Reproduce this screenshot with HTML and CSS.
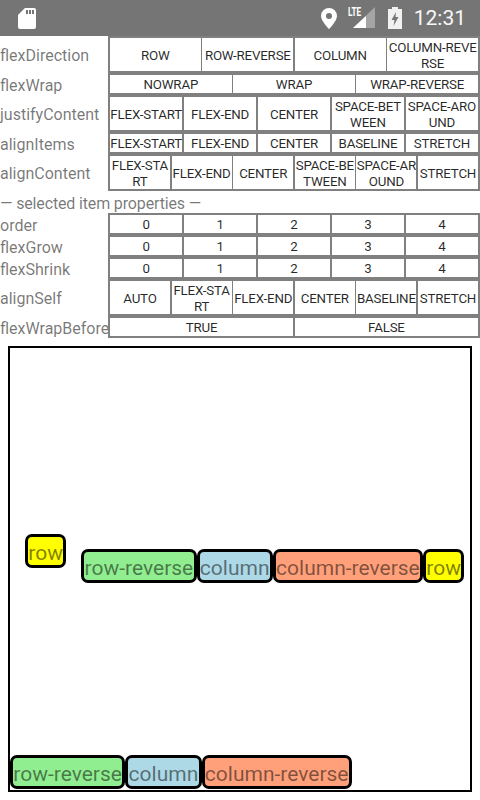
FILE: index.html
```html
<!DOCTYPE html>
<html lang="en">
<head>
<meta charset="utf-8">
<title>Flexbox playground</title>
<link rel="stylesheet" href="styles.css">
</head>
<body>
<div class="status">
  <svg class="sd" width="18" height="21" viewBox="0 0 18 21"><path fill="#fff" d="M7 0H16a2 2 0 0 1 2 2V19a2 2 0 0 1-2 2H2a2 2 0 0 1-2-2V7z"/><path fill="#757575" d="M8 2h2v4H8zM11 2h2v4h-2zM14 2h2v4h-2z"/></svg>
  <span class="grow"></span>
  <svg class="pin" width="16" height="21" viewBox="0 0 16 21"><path fill="#fff" fill-rule="evenodd" d="M8 0a8 8 0 0 1 8 8c0 5-8 13-8 13S0 13 0 8a8 8 0 0 1 8-8zm0 5a3 3 0 1 0 0 6 3 3 0 0 0 0-6z"/></svg>
  <span class="net">
    <span class="lte">LTE</span>
    <svg class="signal" width="22" height="22" viewBox="0 0 22 22"><path fill="#fff" fill-opacity=".35" d="M22 0V21H0z"/><path fill="#fff" d="M0 21 13 9V21z"/></svg>
  </span>
  <svg class="battery" width="14" height="22" viewBox="0 0 14 22"><path fill="#fff" fill-opacity=".9" d="M4 0h6v2h4V22H0V2h4z"/><path fill="#757575" d="M8 5 3.500 13H6.500L5.500 19 10.500 10H7.500z"/></svg>
  <span class="time">12:31</span>
</div>

<div class="line"><div class="label">flexDirection</div><div class="opts tall"><div class="opt">ROW</div><div class="opt">ROW-REVERSE</div><div class="opt">COLUMN</div><div class="opt">COLUMN-REVE<br>RSE</div></div></div>
<div class="line"><div class="label">flexWrap</div><div class="opts"><div class="opt">NOWRAP</div><div class="opt">WRAP</div><div class="opt">WRAP-REVERSE</div></div></div>
<div class="line"><div class="label">justifyContent</div><div class="opts tall"><div class="opt">FLEX-START</div><div class="opt">FLEX-END</div><div class="opt">CENTER</div><div class="opt">SPACE-BET<br>WEEN</div><div class="opt">SPACE-ARO<br>UND</div></div></div>
<div class="line"><div class="label">alignItems</div><div class="opts"><div class="opt">FLEX-START</div><div class="opt">FLEX-END</div><div class="opt">CENTER</div><div class="opt">BASELINE</div><div class="opt">STRETCH</div></div></div>
<div class="line"><div class="label">alignContent</div><div class="opts tall"><div class="opt">FLEX-STA<br>RT</div><div class="opt">FLEX-END</div><div class="opt">CENTER</div><div class="opt">SPACE-BE<br>TWEEN</div><div class="opt">SPACE-AR<br>OUND</div><div class="opt">STRETCH</div></div></div>
<div class="heading">— selected item properties —</div>
<div class="line"><div class="label">order</div><div class="opts"><div class="opt">0</div><div class="opt">1</div><div class="opt">2</div><div class="opt">3</div><div class="opt">4</div></div></div>
<div class="line"><div class="label">flexGrow</div><div class="opts"><div class="opt">0</div><div class="opt">1</div><div class="opt">2</div><div class="opt">3</div><div class="opt">4</div></div></div>
<div class="line"><div class="label">flexShrink</div><div class="opts"><div class="opt">0</div><div class="opt">1</div><div class="opt">2</div><div class="opt">3</div><div class="opt">4</div></div></div>
<div class="line"><div class="label">alignSelf</div><div class="opts tall"><div class="opt">AUTO</div><div class="opt">FLEX-STA<br>RT</div><div class="opt">FLEX-END</div><div class="opt">CENTER</div><div class="opt">BASELINE</div><div class="opt">STRETCH</div></div></div>
<div class="line"><div class="label">flexWrapBefore</div><div class="opts"><div class="opt">TRUE</div><div class="opt">FALSE</div></div></div>

<div class="canvas">
  <div class="flow first">
    <div class="item yellow raised">row</div>
    <div class="item green">row-reverse</div>
    <div class="item blue">column</div>
    <div class="item salmon">column-reverse</div>
    <div class="item yellow">row</div>
  </div>
  <div class="flow last">
    <div class="item green">row-reverse</div>
    <div class="item blue">column</div>
    <div class="item salmon">column-reverse</div>
  </div>
</div>
</body>
</html>
```
FILE: styles.css
```css
* { box-sizing: border-box; }
html, body { margin: 0; padding: 0; background: #fff; }
body { width: 480px; height: 800px; overflow: hidden; font-family: Roboto, sans-serif; }

.status { height: 36px; background: #757575; display: flex; align-items: center; padding: 0 14px 0 18px; }
.grow { flex: 1; }
.pin { margin-right: 10px; }
.net { position: relative; width: 28px; height: 22px; display: block; }
.lte { position: absolute; left: 1px; top: 0; color: #fff; font: 700 12.5px/10px Roboto, sans-serif; transform: scaleX(.65); transform-origin: left; }
.signal { position: absolute; left: 6px; top: 0; }
.battery { margin-left: 13px; margin-right: 12px; }
.time { color: #fff; font-size: 21px; opacity: .95; }

.line { display: flex; }
.label { width: 108px; flex: none; display: flex; align-items: center; padding-top: 2px; font-size: 16px; color: rgba(0,0,0,.54); white-space: nowrap; }
.opts { flex: 1; display: flex; gap: 1.67px; height: 22px; padding: 2px; background: #808080; }
.opts.tall { height: 37px; }
.opt { flex: 1 1 0; min-width: 0; display: flex; align-items: center; justify-content: center; padding-top: 2px; text-align: center; background: #fff; color: rgba(0,0,0,.85); font-size: 13.33px; line-height: 16px; letter-spacing: -.2px; white-space: nowrap; }
.heading { height: 22px; padding-top: 2px; line-height: 22px; font-size: 16px; letter-spacing: -.15px; color: rgba(0,0,0,.54); }

.canvas { margin: 8px 8px 0; height: 446px; border: 2px solid #000; display: flex; flex-direction: column; }
.flow { display: flex; align-items: flex-start; }
.first { margin-top: 186px; padding-left: 15px; }
.last { margin-top: auto; margin-bottom: 1px; }
.item { height: 34px; margin-top: 15px; padding: 2px .3px 0; border: 3px solid #000; border-radius: 7px; font-size: 21px; line-height: 28px; color: rgba(0,0,0,.5); white-space: nowrap; }
.item.raised { margin-top: 0; margin-right: 15px; }
.last .item { margin-top: 0; }
.yellow { background: #ff0; }
.green { background: #90ee90; }
.blue { background: #add8e6; }
.salmon { background: #ffa07a; }
```
